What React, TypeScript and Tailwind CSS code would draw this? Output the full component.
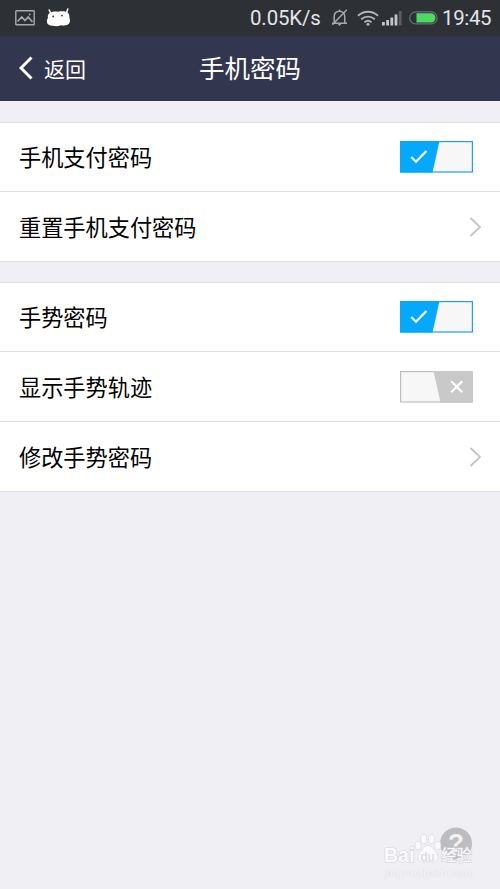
type Row = {
  label: string;
  type: 'on' | 'off' | 'link';
};

const GROUPS: Row[][] = [
  [
    { label: '手机支付密码', type: 'on' },
    { label: '重置手机支付密码', type: 'link' },
  ],
  [
    { label: '手势密码', type: 'on' },
    { label: '显示手势轨迹', type: 'off' },
    { label: '修改手势密码', type: 'link' },
  ],
];

function StatusBar() {
  return (
    <div className="flex h-9 items-center bg-[#2d3035] pr-2 pl-[15px] text-[#e4e5e8]">
      <svg width="20" height="16" viewBox="0 0 20 16" fill="none" stroke="#a6a8ab" strokeWidth="1.4">
        <rect x="0.8" y="0.8" width="18.4" height="14" rx="0.6" />
        <path d="M2.5 11.5L6.8 7l3.2 3.6L13.200 7l4.300 5" strokeWidth="1.6" />
        <circle cx="14.8" cy="4.5" r="0.9" fill="#a6a8ab" stroke="none" />
      </svg>
      <svg className="ml-[11px]" width="25" height="20" viewBox="0 0 25 20">
        <path d="M3.200 2l1.500 3M21.800 .9l-1.200 3.500" stroke="#fff" strokeWidth="1.5" strokeLinecap="round" />
        <path
          d="M3 5.400C6 3.200 9.500 3.400 12 3.700c3-.6 7-.8 9.600.8 2 1.700 1.700 3.700 1.800 5.200 1.300 2.700.6 5.800-1.800 7.100-2.300 1.100-4.600.8-6.800.500-2.500 1.300-5.600 1.200-8.100.5C3.500 17.600 1.200 16.600.9 14c-.2-1.900.5-3 1.100-4.200-.4-1.700-.2-3.200 1-4.400z"
          fill="#fff"
        />
        <circle cx="7.200" cy="8.400" r="0.9" fill="#2d3035" />
        <circle cx="16" cy="7.600" r="0.9" fill="#2d3035" />
      </svg>
      <span className="ml-auto w-[71px] font-['Roboto',sans-serif] text-[20.4px] leading-9 tracking-[-0.1px] whitespace-nowrap">
        0.05K/s
      </span>
      <svg className="ml-[10px]" width="17" height="18" viewBox="0 0 17 18" fill="none" stroke="#a6a8ab" strokeWidth="1.5">
        <path d="M1 14.200h15M3.200 14V7.800C3.200 4.300 5.200 2.200 8.500 2.200s5.300 2.100 5.300 5.600V14M8.500 2.200V.5M1.400 15.800L15.800 .8" />
        <path d="M6.800 15h3.400l-1.700 2z" fill="#a6a8ab" stroke="none" />
      </svg>
      <svg className="ml-[9px]" width="22" height="16" viewBox="0 0 22 16" fill="none" stroke="#b2b4b7" strokeWidth="1.9">
        <path d="M1 5.700c5.800-5.300 14.200-5.300 20 0M4.200 9.200c4-3.500 9.600-3.500 13.600 0M7.400 12.400c2.100-1.800 5.100-1.800 7.200 0" />
        <circle cx="11" cy="14.200" r="1.5" fill="#b2b4b7" stroke="none" />
      </svg>
      <svg className="ml-[3px]" width="20" height="16" viewBox="0 0 20 16" fill="#c4c5c7">
        <rect x="0" y="12" width="2.8" height="3.5" />
        <rect x="4.2" y="10" width="2.8" height="5.5" />
        <rect x="8.4" y="7.5" width="2.8" height="8" />
        <rect x="12.6" y="4.5" width="2.8" height="11" />
        <rect x="16.8" y="1" width="2.8" height="14.5" fill="#5a5c60" />
      </svg>
      <svg className="ml-[7px]" width="29" height="14" viewBox="0 0 29 14">
        <rect x="0.7" y="0.9" width="27.4" height="12" rx="6" fill="none" stroke="#6b6d70" strokeWidth="1.2" />
        <path d="M7.5 2.2h14.3a4.7 4.7 0 0 1 0 9.4H7.5z" fill="#4cd964" />
      </svg>
      <span className="ml-1 w-[50px] font-['Roboto',sans-serif] text-[20.4px] leading-9 tracking-[-0.3px] whitespace-nowrap">
        19:45
      </span>
    </div>
  );
}

function Toggle({ on }: { on: boolean }) {
  return on ? (
    <svg width="73" height="32" viewBox="0 0 73 32">
      <rect x="0.6" y="0.6" width="71.8" height="30.4" fill="#f7f7f7" stroke="#1fa0e8" strokeWidth="1.2" />
      <path d="M0 0h39.5l-7 31.5H0z" fill="#04a9fd" />
      <path d="M11.2 16l4.8 4.7L26.4 10" fill="none" stroke="#fff" strokeWidth="2.2" />
    </svg>
  ) : (
    <svg width="73" height="32" viewBox="0 0 73 32">
      <rect x="0.6" y="0.6" width="71.8" height="30.4" fill="#f7f7f7" stroke="#bfbfbf" strokeWidth="1.2" />
      <path d="M33.5 0H73v31.5H40.5z" fill="#c9c9c9" />
      <path d="M51.2 10.3l11 11M62.2 10.3l-11 11" stroke="#fff" strokeWidth="2.1" />
    </svg>
  );
}

function SettingRow({ row }: { row: Row }) {
  return (
    <div className="flex h-[70px] items-center justify-between border-b border-[#dedee0] pr-[18px] pl-[19px] first:h-[69px]">
      <span className="pb-0.5 text-[22.2px] leading-8 text-black">{row.label}</span>
      {row.type === 'link' ? (
        <svg width="13" height="20" viewBox="0 0 13 20" fill="none" stroke="#c5c5c8" strokeWidth="1.9">
          <path d="M1.5 1l9.5 9-9.5 9" />
        </svg>
      ) : (
        <div className="pr-[9px]">
          <Toggle on={row.type === 'on'} />
        </div>
      )}
    </div>
  );
}

function Watermark() {
  return (
    <div className="absolute right-6 bottom-2 grid w-[93px] font-['Liberation_Sans','Noto_Sans_CJK_SC',sans-serif]">
      <svg width="93" height="40" viewBox="0 0 93 40">
        <circle cx="73" cy="18.5" r="16" fill="#bdbdbf" />
        <text x="73" y="27" textAnchor="middle" fontSize="26" fontWeight="700" fill="#f2f2f4">?</text>
        <g fill="#fafafc" stroke="#dcdce0" strokeWidth="0.8">
          <ellipse cx="35" cy="20.500" rx="3" ry="4.2" />
          <ellipse cx="40.8" cy="14" rx="3.1" ry="4.6" />
          <ellipse cx="48.6" cy="14" rx="3.1" ry="4.6" />
          <ellipse cx="54.8" cy="20.500" rx="3" ry="4.2" />
          <path d="M45 20.500c4 0 5 3.500 8 6.500 3.400 3.400 2.500 9.500-2 10.200-2.300.2-4-.6-6-.6s-3.700.8-6 .6c-4.500-.7-5.400-6.800-2-10.200 3-3 4-6.500 8-6.500z" />
        </g>
        <g fill="#fafafc" stroke="#d5d5d9" strokeWidth="1.2" paintOrder="stroke" strokeLinejoin="round">
          <text x="1" y="37" fontSize="19.5" fontWeight="700">Bai</text>
          <text x="58" y="36" fontSize="15.5">经验</text>
        </g>
        <text x="37.500" y="35.500" fontSize="12.5" fill="#d5d5da">du</text>
      </svg>
      <span className="pl-0.5 text-[11px] leading-4 whitespace-nowrap text-[#f9f9fb] [text-shadow:0_0_1px_#c5c5ca]">jingyan.baidu.com</span>
    </div>
  );
}

export default function App() {
  return (
    <div lang="zh-CN" className="relative h-[889px] w-[500px] overflow-hidden bg-[#efeff4] font-['Noto_Sans_CJK_SC',sans-serif]">
      <StatusBar />
      <header className="grid h-[65px] grid-cols-[1fr_auto_1fr] items-center border-t border-[#303349] bg-[#32364f] pb-0.5 text-white">
        <button type="button" className="flex items-center gap-[11px] pl-[19px] text-[21px] leading-8">
          <svg width="14" height="24" viewBox="0 0 14 24" fill="none" stroke="currentColor" strokeWidth="3">
            <path d="M12.5 1.5L2 12l10.5 10.5" />
          </svg>
          返回
        </button>
        <h1 className="pb-0.5 text-[25.5px] leading-9">手机密码</h1>
      </header>
      <main className="flex flex-col gap-5 pt-[21px]">
        {GROUPS.map((rows) => (
          <section key={rows[0].label} className="border-t border-[#dedee0] bg-white">
            {rows.map((row) => (
              <SettingRow key={row.label} row={row} />
            ))}
          </section>
        ))}
      </main>
      <Watermark />
    </div>
  );
}
